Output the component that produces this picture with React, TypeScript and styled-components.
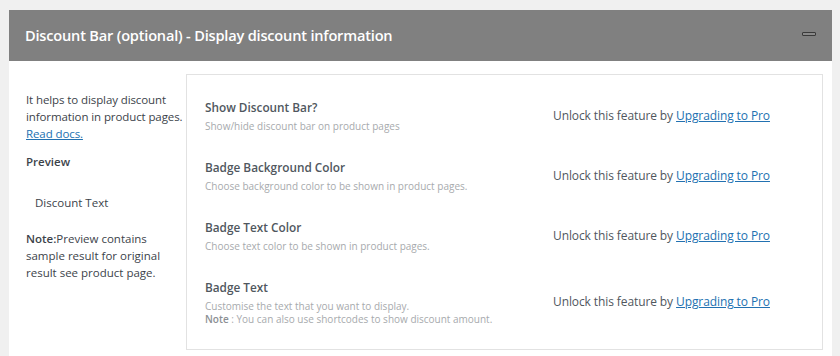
import * as React from "react";
import styled, { createGlobalStyle } from "styled-components";

const GlobalStyle = createGlobalStyle`
  *, *::before, *::after {
    box-sizing: border-box;
  }
  html, body {
    margin: 0;
    padding: 0;
    background: #f0f0f0;
    font-family: "Open Sans", "Noto Sans", Arial, sans-serif;
  }
`;

const Page = styled.div`
  padding: 10px 8px 0 9px;
  height: 356px;
  overflow: hidden;
`;

const Panel = styled.section`
  background: #fff;
  height: 100%;
  display: flex;
  flex-direction: column;
`;

const Header = styled.header`
  height: 51px;
  flex: none;
  background: #808080;
  display: flex;
  align-items: center;
  justify-content: space-between;
  padding: 0 16px 1px 16px;
`;

const Title = styled.h2`
  margin: 0;
  color: #fff;
  font-size: 14.6px;
  font-weight: 600;
  letter-spacing: -0.2px;
`;

const Collapse = styled.button`
  width: 14px;
  height: 4px;
  padding: 0;
  margin-top: -2px;
  border: 1px solid #3a3a3a;
  border-radius: 1px;
  background: #8a8a8a;
  cursor: pointer;
`;

const Body = styled.div`
  flex: 1;
  display: flex;
  padding: 13px 9px 0 17px;
`;

const Aside = styled.aside`
  width: 160px;
  flex: none;
  padding-top: 17px;
  font-size: 11.5px;
  line-height: 17px;
  color: #3c434a;
`;

const Intro = styled.p`
  margin: 0;
  letter-spacing: -0.1px;
`;

const Link = styled.a`
  color: #2271b1;
  text-decoration: underline;
`;

const Label = styled.div`
  margin-top: 11px;
  font-weight: 600;
  color: #3c434a;
`;

const PreviewBadge = styled.div`
  margin-top: 24px;
  padding-left: 9px;
  color: #3c434a;
`;

const Note = styled.p`
  margin: 19px 0 0;
  padding-right: 10px;
  strong {
    font-weight: 600;
  }
`;

const Box = styled.div`
  flex: 1;
  height: 276px;
  border: 1px solid #e2e2e2;
  padding: 20px 0 0 18px;
`;

const Row = styled.div`
  display: grid;
  grid-template-columns: 348px 1fr;
  align-items: center;
  min-height: 40px;
  & + & {
    margin-top: 20px;
  }
  &:last-child {
    margin-top: 22px;
  }
`;

const FieldTitle = styled.div`
  font-size: 11.8px;
  line-height: 20px;
  font-weight: 600;
  color: #50575e;
  margin-bottom: 3px;
`;

const FieldDesc = styled.div`
  font-size: 10px;
  line-height: 13px;
  color: #a7aaad;
  b {
    font-weight: 600;
    color: #8c8f94;
  }
`;

const Unlock = styled.div`
  font-size: 12px;
  color: #50575e;
  letter-spacing: -0.1px;
`;

type Field = { title: string; desc: string; note?: string };

const fields: Field[] = [
  { title: "Show Discount Bar?", desc: "Show/hide discount bar on product pages" },
  { title: "Badge Background Color", desc: "Choose background color to be shown in product pages." },
  { title: "Badge Text Color", desc: "Choose text color to be shown in product pages." },
  {
    title: "Badge Text",
    desc: "Customise the text that you want to display.",
    note: "You can also use shortcodes to show discount amount.",
  },
];

export default function App() {
  return (
    <Page>
      <GlobalStyle />
      <Panel>
        <Header>
          <Title>Discount Bar (optional) - Display discount information</Title>
          <Collapse aria-label="Collapse" />
        </Header>
        <Body>
          <Aside>
            <Intro>
              It helps to display discount information in product pages.{" "}
              <Link href="#">Read docs.</Link>
            </Intro>
            <Label>Preview</Label>
            <PreviewBadge>Discount Text</PreviewBadge>
            <Note>
              <strong>Note:</strong>Preview contains sample result for original result see product page.
            </Note>
          </Aside>
          <Box>
            {fields.map((f) => (
              <Row key={f.title}>
                <div>
                  <FieldTitle>{f.title}</FieldTitle>
                  <FieldDesc>
                    {f.desc}
                    {f.note && (
                      <>
                        <br />
                        <b>Note</b> : {f.note}
                      </>
                    )}
                  </FieldDesc>
                </div>
                <Unlock>
                  Unlock this feature by <Link href="#">Upgrading to Pro</Link>
                </Unlock>
              </Row>
            ))}
          </Box>
        </Body>
      </Panel>
    </Page>
  );
}
